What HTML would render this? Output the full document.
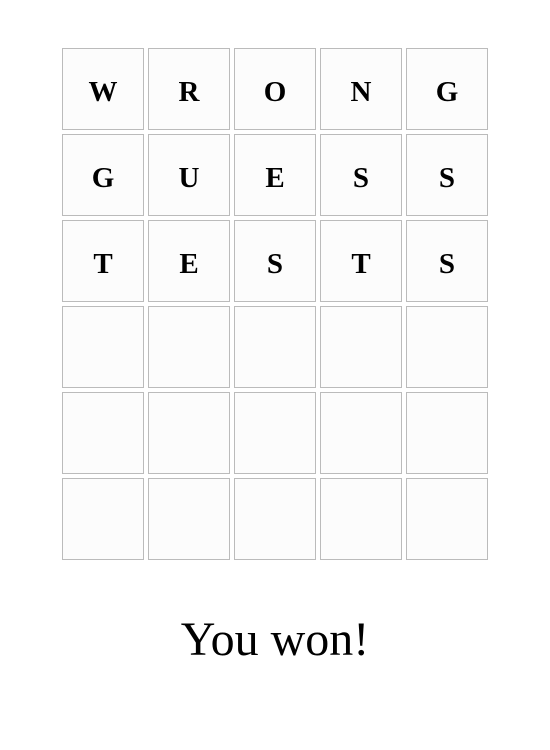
<!DOCTYPE html>
<html><head><meta charset="utf-8"><style>
html,body{margin:0;padding:0;background:#fff;width:550px;height:750px;overflow:hidden}
.grid{position:absolute;left:62px;top:48px;display:grid;grid-template-columns:repeat(5,82px);grid-auto-rows:82px;gap:4px}
.t{box-sizing:border-box;border:1px solid #bbb;background:#fcfcfc;display:flex;align-items:center;justify-content:center;font:bold 29px "Liberation Serif",serif;color:#000;padding-top:6px}
.msg{position:absolute;left:0;width:550px;top:612px;text-align:center;font:48px "Liberation Serif",serif;color:#000;line-height:56px}
</style></head><body>
<div class="grid">
<div class="t">W</div><div class="t">R</div><div class="t">O</div><div class="t">N</div><div class="t">G</div>
<div class="t">G</div><div class="t">U</div><div class="t">E</div><div class="t">S</div><div class="t">S</div>
<div class="t">T</div><div class="t">E</div><div class="t">S</div><div class="t">T</div><div class="t">S</div>
<div class="t"></div><div class="t"></div><div class="t"></div><div class="t"></div><div class="t"></div>
<div class="t"></div><div class="t"></div><div class="t"></div><div class="t"></div><div class="t"></div>
<div class="t"></div><div class="t"></div><div class="t"></div><div class="t"></div><div class="t"></div>
</div>
<div class="msg">You won!</div>
</body></html>
